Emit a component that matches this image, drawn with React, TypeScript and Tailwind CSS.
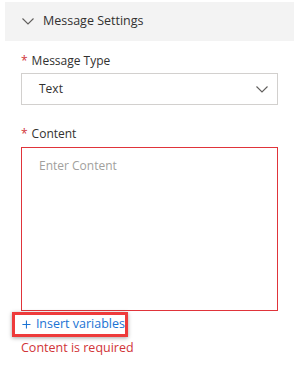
function Chevron({ className }: { className?: string }) {
  return (
    <svg width="12" height="7" viewBox="0 0 12 7" fill="none" stroke="currentColor" strokeWidth="1.1" className={className}>
      <path d="M0.5 0.5L6 6L11.5 0.5" />
    </svg>
  );
}

export default function App() {
  return (
    <div
      className="w-[302px] h-[378px] bg-white pt-[2px] text-[#323130] text-[12px]"
      style={{ fontFamily: '"Open Sans", "Noto Sans", sans-serif' }}
    >
      {/* Section header */}
      <div className="mx-[5px] w-[289px] h-[39px] bg-[#f3f3f3] flex items-center pl-[17px] gap-[9px]">
        <Chevron className="text-[#605e5c]" />
        <span className="text-[#323130] text-[12.5px]">Message Settings</span>
      </div>

      <div className="px-[21px] w-[299px]">
        {/* Message type */}
        <div className="mt-[10px] h-[20px] flex items-center">
          <span className="text-[#d13438] mr-[4px]">*</span>
          <span>Message Type</span>
        </div>
        <div className="mt-[2px] h-[32px] border border-solid border-[#d2d0ce] flex items-center justify-between pl-[17px] pr-[9px]">
          <span>Text</span>
          <Chevron className="text-[#605e5c]" />
        </div>

        {/* Content */}
        <div className="mt-[19px] h-[20px] flex items-center">
          <span className="text-[#d13438] mr-[4px]">*</span>
          <span>Content</span>
        </div>
        <div className="mt-[3px] h-[164px] border border-solid border-[#e0343a] pl-[17px] pt-[9px]">
          <span className="text-[#a19f9d]">Enter Content</span>
        </div>
      </div>

      {/* Insert variables */}
      <div className="ml-[12px] mt-[1px] w-[116px] h-[25px] border-[3px] border-[#ee3b3b] shadow-[0_1px_4px_rgba(0,0,0,0.35)] flex items-center pl-[7px] gap-[5px] text-[#1a73d4] whitespace-nowrap">
        <svg width="11" height="11" viewBox="0 0 11 11" fill="none" stroke="currentColor" strokeWidth="1.3">
          <path d="M5.5 0.5v10M0.5 5.5h10" />
        </svg>
        <span className="text-[12.5px]">Insert variables</span>
      </div>

      <div className="ml-[21px] mt-[2px] text-[#d13438] text-[12.5px]">Content is required</div>
    </div>
  );
}
